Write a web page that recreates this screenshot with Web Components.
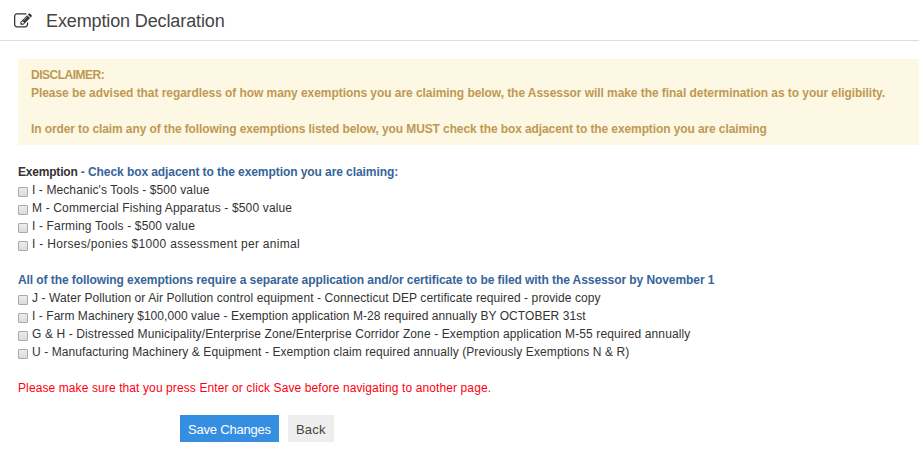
<!DOCTYPE html>
<html lang="en">
<head>
<meta charset="utf-8">
<title>Exemption Declaration</title>
<style>
  body {
    margin: 0;
    background: #fff;
    color: #333;
    font: 12px/18px "Liberation Sans", Arial, sans-serif;
  }
</style>
</head>
<body>
<exemption-page></exemption-page>
<script>
(() => {
  class PageTitle extends HTMLElement {
    constructor() {
      super();
      this.attachShadow({mode: 'open'});
      this.shadowRoot.innerHTML = `
      <style>
        :host {
          display: flex;
          align-items: center;
          box-sizing: border-box;
          height: 41px;
          padding-left: 14px;
          border-bottom: 1px solid #ddd;
        }
        svg {
          width: 18px;
          height: 18px;
          margin: 2px 14px 0 0;
          fill: #333;
        }
        h1 {
          margin: 0;
          color: #444;
          font-size: 18px;
          font-weight: normal;
          line-height: 38px;
          padding-top: 2px;
          letter-spacing: -.12px;
        }
      </style>
      <svg viewBox="0 0 1792 1792">
        <path d="M888 1184l116-116-152-152-116 116v56h96v96h56zm440-720q-16-16-33 1l-350 350q-17 17-1 33t33-1l350-350q17-17 1-33zm80 594v190q0 119-84.500 203.500t-203.500 84.500h-832q-119 0-203.500-84.500t-84.500-203.500v-832q0-119 84.500-203.500t203.500-84.500h832q63 0 117 25 15 7 18 23 3 17-9 29l-49 49q-14 14-32 8-23-6-45-6h-832q-66 0-113 47t-47 113v832q0 66 47 113t113 47h832q66 0 113-47t47-113v-126q0-13 9-22l64-64q15-15 35-7t20 29zm-96-738l288 288-672 672h-288v-288zm444 132l-92 92-288-288 92-92q28-28 68-28t68 28l152 152q28 28 28 68t-28 68z"/>
      </svg>
      <h1><slot></slot></h1>
      `;
    }
  }
  customElements.define('page-title', PageTitle);

  class AlertBox extends HTMLElement {
    constructor() {
      super();
      this.attachShadow({mode: 'open'});
      this.shadowRoot.innerHTML = `
      <style>
        :host {
          display: block;
          padding: 7px 13px;
          background: #fcf8e3;
          color: #c09853;
          font-weight: bold;
          white-space: nowrap;
        }
      </style>
      <slot></slot>
      `;
    }
  }
  customElements.define('alert-box', AlertBox);

  class ExemptionGroup extends HTMLElement {
    constructor() {
      super();
      this.attachShadow({mode: 'open'});
      this.shadowRoot.innerHTML = `
      <style>
        :host {
          display: block;
          margin-top: 18px;
        }
        .heading {
          color: #36649a;
          font-weight: bold;
          white-space: nowrap;
          letter-spacing: -.075px;
        }
      </style>
      <div class="heading"><slot name="heading"></slot></div>
      <slot></slot>
      `;
    }
  }
  customElements.define('exemption-group', ExemptionGroup);

  class ExemptionOption extends HTMLElement {
    constructor() {
      super();
      this.attachShadow({mode: 'open'});
      this.shadowRoot.innerHTML = `
      <style>
        :host {
          display: block;
        }
        label {
          display: flex;
          height: 18px;
          white-space: nowrap;
        }
        input {
          appearance: none;
          box-sizing: border-box;
          flex: none;
          width: 10px;
          height: 10px;
          margin: 6px 4px 0 0;
          border: 1px solid #aaa;
          border-radius: 1px;
          background: linear-gradient(#ececec, #dcdcdc);
        }
        input:checked {
          background: #555;
        }
      </style>
      <label><input type="checkbox"><slot></slot></label>
      `;
    }
  }
  customElements.define('exemption-option', ExemptionOption);

  class ActionButton extends HTMLElement {
    constructor() {
      super();
      this.attachShadow({mode: 'open'});
      this.shadowRoot.innerHTML = `
      <style>
        :host {
          display: block;
        }
        button {
          display: block;
          box-sizing: border-box;
          height: 27px;
          padding: 2px 8px 0;
          border: 0;
          background: #eee;
          color: #444;
          font: 13px/25px "Liberation Sans", Arial, sans-serif;
          letter-spacing: inherit;
          white-space: nowrap;
        }
        :host([primary]) button {
          background: #368ee0;
          color: #fff;
        }
      </style>
      <button type="button"><slot></slot></button>
      `;
    }
  }
  customElements.define('action-button', ActionButton);

  class ExemptionPage extends HTMLElement {
    constructor() {
      super();
      this.attachShadow({mode: 'open'});
      this.shadowRoot.innerHTML = `
      <style>
        :host {
          display: block;
        }
        main {
          padding: 18px 0 0 18px;
        }
        b {
          color: #333;
          letter-spacing: -.2px;
        }
        .notice {
          margin: 18px 0 0;
          color: #ff0010;
          letter-spacing: .103px;
        }
        .actions {
          display: flex;
          gap: 9px;
          padding: 18px 0 0 162px;
        }
      </style>
      <page-title><span>Exemption Declaration</span></page-title>
      <main>
        <alert-box>
          <span style="letter-spacing: -.5px">DISCLAIMER:</span><br>
          <span style="letter-spacing: -.06px">Please be advised that regardless of how many exemptions you are claiming below, the Assessor will make the final determination as to your eligibility.</span><br>
          <br>
          <span style="letter-spacing: -.103px">In order to claim any of the following exemptions listed below, you MUST check the box adjacent to the exemption you are claiming</span>
        </alert-box>
        <exemption-group>
          <span slot="heading"><b>Exemption</b> - Check box adjacent to the exemption you are claiming:</span>
          <exemption-option style="letter-spacing: .1px">I - Mechanic's Tools - $500 value</exemption-option>
          <exemption-option style="letter-spacing: .15px">M - Commercial Fishing Apparatus - $500 value</exemption-option>
          <exemption-option style="letter-spacing: .15px">I - Farming Tools - $500 value</exemption-option>
          <exemption-option style="letter-spacing: .31px">I - Horses/ponies $1000 assessment per animal</exemption-option>
        </exemption-group>
        <exemption-group>
          <span slot="heading">All of the following exemptions require a separate application and/or certificate to be filed with the Assessor by November 1</span>
          <exemption-option style="letter-spacing: .084px">J - Water Pollution or Air Pollution control equipment - Connecticut DEP certificate required - provide copy</exemption-option>
          <exemption-option style="letter-spacing: .06px">I - Farm Machinery $100,000 value - Exemption application M-28 required annually BY OCTOBER 31st</exemption-option>
          <exemption-option style="letter-spacing: .119px">G &amp; H - Distressed Municipality/Enterprise Zone/Enterprise Corridor Zone - Exemption application M-55 required annually</exemption-option>
          <exemption-option style="letter-spacing: .087px">U - Manufacturing Machinery &amp; Equipment - Exemption claim required annually (Previously Exemptions N &amp; R)</exemption-option>
        </exemption-group>
        <p class="notice"><span>Please make sure that you press Enter or click Save before navigating to another page.</span></p>
        <div class="actions">
          <action-button primary style="letter-spacing: -.2px">Save Changes</action-button>
          <action-button style="letter-spacing: .25px">Back</action-button>
        </div>
      </main>
      `;
    }
  }
  customElements.define('exemption-page', ExemptionPage);
})()
</script>
</body>
</html>
